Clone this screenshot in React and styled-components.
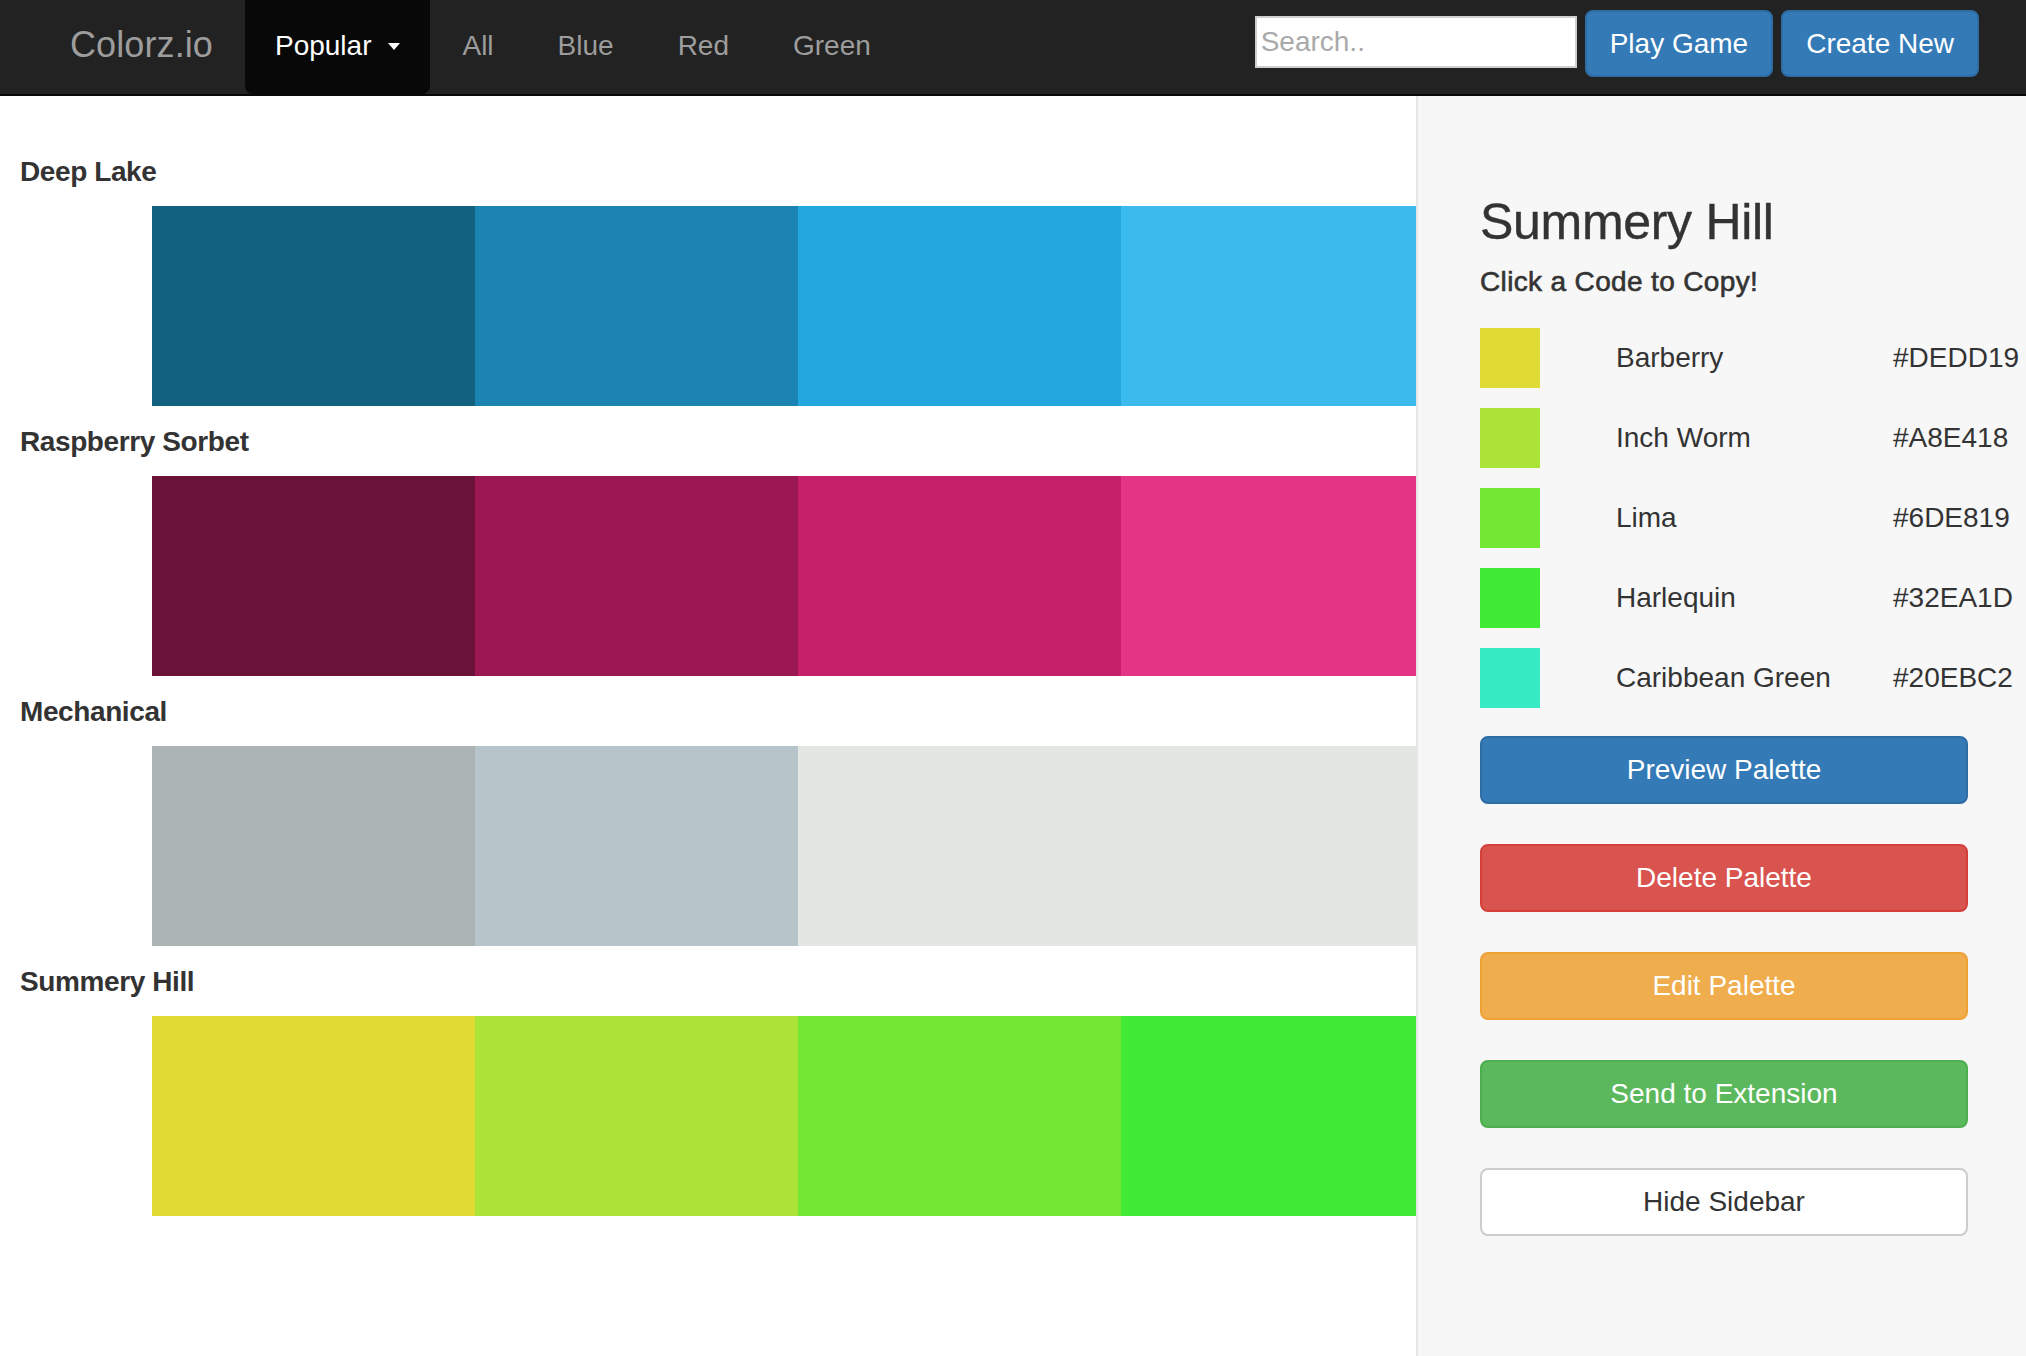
import React from "react";
import styled, { createGlobalStyle } from "styled-components";

const GlobalStyle = createGlobalStyle`
  html, body {
    margin: 0;
    padding: 0;
    height: 100%;
  }
  body {
    font-family: "Liberation Sans", Arial, Helvetica, sans-serif;
    color: #333;
    background: #fff;
  }
  * { box-sizing: border-box; }
`;

const Page = styled.div`
  display: flex;
  flex-direction: column;
  height: 100vh;
  overflow: hidden;
`;

const Navbar = styled.nav`
  flex: 0 0 96px;
  display: flex;
  align-items: stretch;
  background: #222;
  border-bottom: 2px solid #080808;
  padding: 0 47px 0 40px;
`;

const Brand = styled.a`
  display: flex;
  align-items: center;
  padding: 0 32px 4px 30px;
  font-size: 36px;
  color: #9d9d9d;
  text-decoration: none;
  letter-spacing: 0.1px;
`;

const NavItem = styled.a`
  display: flex;
  align-items: center;
  padding: 0 ${(p) => (p.$active ? "30px" : "32px")} 3px;
  font-size: 28px;
  color: ${(p) => (p.$active ? "#fff" : "#9d9d9d")};
  background: ${(p) => (p.$active ? "#080808" : "transparent")};
  border-radius: 0 0 8px 8px;
  text-decoration: none;
`;

const Caret = styled.span`
  display: inline-block;
  margin-left: 17px;
  margin-top: 2px;
  width: 0;
  height: 0;
  border-top: 7px solid #fff;
  border-left: 6px solid transparent;
  border-right: 6px solid transparent;
`;

const NavRight = styled.div`
  margin-left: auto;
  display: flex;
  align-items: flex-start;
  gap: 8px;
  padding-top: 10px;
`;

const Search = styled.input`
  margin-top: 6px;
  width: 322px;
  height: 52px;
  border: 2px solid #cfcfcf;
  border-radius: 0;
  padding: 0 4px;
  font-family: inherit;
  font-size: 28px;
  color: #333;
  background: #fff;
  outline: none;
  &::placeholder {
    color: #a9a9a9;
  }
`;

const NavButton = styled.button`
  height: 67px;
  padding: 0 23px;
  border: 2px solid #2e6da4;
  border-radius: 8px;
  background: #337ab7;
  color: #fff;
  font-family: inherit;
  font-size: 28px;
  cursor: pointer;
`;

const Body = styled.div`
  flex: 1;
  display: flex;
  min-height: 0;
`;

const Main = styled.main`
  flex: 1;
  min-width: 0;
  overflow: hidden;
  padding-top: 40px;
`;

const PaletteBlock = styled.section`
  display: flex;
  flex-direction: column;
`;

const PaletteName = styled.h3`
  margin: 0 0 18px;
  padding: 20px 0 0 20px;
  font-size: 28px;
  line-height: 32px;
  font-weight: 700;
  color: #333;
  letter-spacing: -0.4px;
`;

const SwatchRow = styled.div`
  display: flex;
  margin-left: 152px;
  height: 200px;
`;

const Swatch = styled.div`
  flex: 0 0 323px;
  height: 100%;
  background: ${(p) => p.$color};
`;

const Sidebar = styled.aside`
  flex: 0 0 608px;
  background: #f7f7f7;
  border-left: 2px solid #e6e6e6;
  padding: 99px 58px 0 62px;
  display: flex;
  flex-direction: column;
`;

const Title = styled.h1`
  margin: 0;
  font-size: 50px;
  line-height: 54px;
  font-weight: 400;
  color: #333;
  letter-spacing: -0.3px;
  -webkit-text-stroke: 0.4px #333;
`;

const Subtitle = styled.h4`
  margin: 17px 0 30px;
  font-size: 28px;
  line-height: 32px;
  font-weight: 400;
  color: #333;
  letter-spacing: 0.35px;
  -webkit-text-stroke: 0.6px #333;
`;

const ColorList = styled.div`
  display: flex;
  flex-direction: column;
  gap: 20px;
`;

const ColorRow = styled.div`
  display: grid;
  grid-template-columns: 60px 277px 140px;
  align-items: center;
  height: 60px;
`;

const ColorChip = styled.div`
  width: 60px;
  height: 60px;
  background: ${(p) => p.$color};
`;

const ColorName = styled.span`
  margin-left: 76px;
  font-size: 28px;
  color: #333;
  white-space: nowrap;
`;

const ColorCode = styled.span`
  margin-left: 76px;
  font-size: 28px;
  color: #333;
  cursor: pointer;
  white-space: nowrap;
`;

const Actions = styled.div`
  margin-top: 28px;
  display: flex;
  flex-direction: column;
  gap: 40px;
`;

const variants = {
  primary: { bg: "#337ab7", border: "#2e6da4", color: "#fff" },
  danger: { bg: "#d9534f", border: "#d43f3a", color: "#fff" },
  warning: { bg: "#f0ad4e", border: "#eea236", color: "#fff" },
  success: { bg: "#5cb85c", border: "#4cae4c", color: "#fff" },
  default: { bg: "#fff", border: "#ccc", color: "#333" },
};

const ActionButton = styled.button`
  width: 488px;
  height: 68px;
  border-radius: 8px;
  border: 2px solid ${(p) => variants[p.$variant].border};
  background: ${(p) => variants[p.$variant].bg};
  color: ${(p) => variants[p.$variant].color};
  font-family: inherit;
  font-size: 28px;
  cursor: pointer;
`;

const palettes = [
  { name: "Deep Lake", colors: ["#12617f", "#1b84b3", "#22a7df", "#3bbaee"] },
  { name: "Raspberry Sorbet", colors: ["#6b1239", "#9b1852", "#c61f69", "#e33486"] },
  { name: "Mechanical", colors: ["#abb3b5", "#b7c4c9", "#e2e7e1", "#e2e7e1"] },
  { name: "Summery Hill", colors: ["#e0db34", "#abe336", "#72e834", "#40ea35", "#36ebc4"] },
];

const selected = [
  { name: "Barberry", code: "#DEDD19", color: "#e0db34" },
  { name: "Inch Worm", code: "#A8E418", color: "#abe336" },
  { name: "Lima", code: "#6DE819", color: "#72e834" },
  { name: "Harlequin", code: "#32EA1D", color: "#40ea35" },
  { name: "Caribbean Green", code: "#20EBC2", color: "#36ebc4" },
];

export default function App() {
  return (
    <Page>
      <GlobalStyle />
      <Navbar>
        <Brand href="#">Colorz.io</Brand>
        <NavItem $active href="#">
          Popular <Caret />
        </NavItem>
        <NavItem href="#">All</NavItem>
        <NavItem href="#">Blue</NavItem>
        <NavItem href="#">Red</NavItem>
        <NavItem href="#">Green</NavItem>
        <NavRight>
          <Search placeholder="Search.." />
          <NavButton>Play Game</NavButton>
          <NavButton>Create New</NavButton>
        </NavRight>
      </Navbar>
      <Body>
        <Main>
          {palettes.map((p) => (
            <PaletteBlock key={p.name}>
              <PaletteName>{p.name}</PaletteName>
              <SwatchRow>
                {p.colors.map((c, i) => (
                  <Swatch key={i} $color={c} />
                ))}
              </SwatchRow>
            </PaletteBlock>
          ))}
        </Main>
        <Sidebar>
          <Title>Summery Hill</Title>
          <Subtitle>Click a Code to Copy!</Subtitle>
          <ColorList>
            {selected.map((c) => (
              <ColorRow key={c.code}>
                <ColorChip $color={c.color} />
                <ColorName>{c.name}</ColorName>
                <ColorCode>{c.code}</ColorCode>
              </ColorRow>
            ))}
          </ColorList>
          <Actions>
            <ActionButton $variant="primary">Preview Palette</ActionButton>
            <ActionButton $variant="danger">Delete Palette</ActionButton>
            <ActionButton $variant="warning">Edit Palette</ActionButton>
            <ActionButton $variant="success">Send to Extension</ActionButton>
            <ActionButton $variant="default">Hide Sidebar</ActionButton>
          </Actions>
        </Sidebar>
      </Body>
    </Page>
  );
}
